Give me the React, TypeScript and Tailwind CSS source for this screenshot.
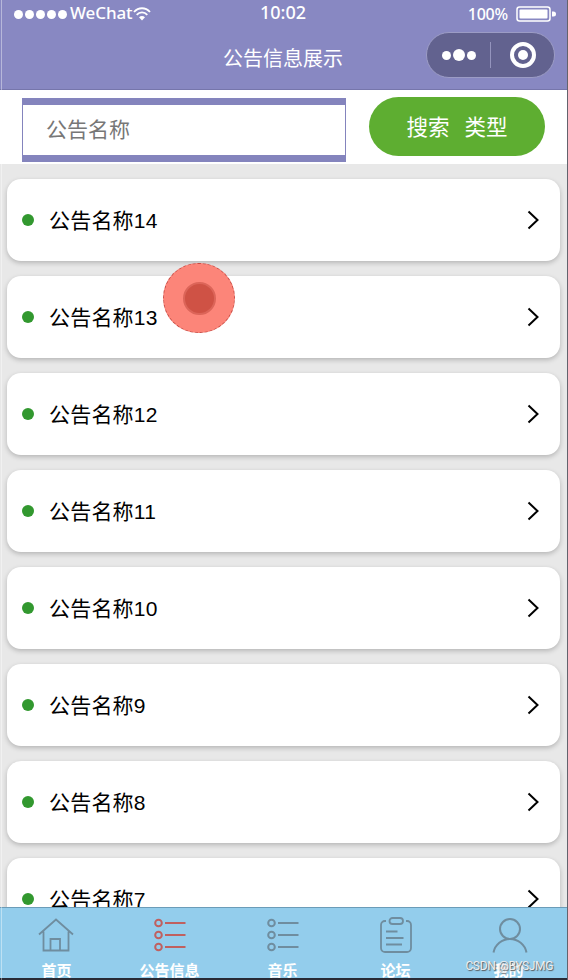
const notices = [14, 13, 12, 11, 10, 9, 8, 7];

const tabs = [
  { label: "首页", icon: <HomeIcon /> },
  { label: "公告信息", icon: <ListIcon />, active: true },
  { label: "音乐", icon: <ListIcon /> },
  { label: "论坛", icon: <ClipboardIcon /> },
  { label: "我的", icon: <UserIcon /> },
];

function HomeIcon() {
  return (
    <svg width="38" height="38" viewBox="0 0 38 38" fill="none" stroke="currentColor" strokeWidth="1.8">
      <path d="M1 18.500 18 3.500l17 15M5.500 15.500V34.500h25V15.500M12.500 34.500V23h9.500v11.500" />
    </svg>
  );
}

function ListIcon() {
  return (
    <svg width="38" height="38" viewBox="0 0 38 38" fill="none" stroke="currentColor" strokeWidth="2">
      <circle cx="7.500" cy="7" r="3.300" />
      <circle cx="7.500" cy="19" r="3.300" />
      <circle cx="7.500" cy="31" r="3.300" />
      <path d="M14 7h20.500M14 19h20.500M14 31h20.500" />
    </svg>
  );
}

function ClipboardIcon() {
  return (
    <svg width="38" height="38" viewBox="0 0 38 38" fill="none" stroke="currentColor" strokeWidth="1.8">
      <path d="M9 5H8a4 4 0 0 0-4 4V32a4 4 0 0 0 4 4h22a4 4 0 0 0 4-4V9a4 4 0 0 0-4-4h-1" />
      <rect x="12.500" y="2" width="13.500" height="6" rx="3" />
      <path d="M9 15.500h11.500M9 22h17.500M9 28.500h16" />
    </svg>
  );
}

function UserIcon() {
  return (
    <svg width="38" height="38" viewBox="0 0 38 38" fill="none" stroke="currentColor" strokeWidth="2">
      <circle cx="20" cy="13" r="10" />
      <path d="M3.500 36.500C5 28.500 12 23 20 23S35 28.500 36.500 36.500" />
    </svg>
  );
}

export default function App() {
  return (
    <div className="relative flex h-[980px] w-[568px] flex-col overflow-hidden bg-[#e8e8e8] font-['Liberation_Sans','Noto_Sans_CJK_SC',sans-serif] text-black">
      {/* HEADER */}
      <header className="h-[90px] shrink-0 border-b border-[#7676ab] bg-[#8888c2] text-white">
        <div className="grid h-[27px] grid-cols-3 items-center pr-[12px] pl-[14px] font-['Noto_Sans',sans-serif]">
          <div className="flex items-center">
            <div className="flex gap-[2px]">
              {[1, 2, 3, 4, 5].map((n) => (
                <span key={n} className="size-[9px] rounded-full bg-white"></span>
              ))}
            </div>
            <span className="ml-[3px] pb-[2px] text-[17px] leading-6 font-medium tracking-[-0.1px]">WeChat</span>
            <svg width="18" height="14" viewBox="0 0 18 14" fill="none" stroke="white" strokeWidth="1.8">
              <path d="M1 5C5.500 0 12.500 0 17 5M3.700 7.800c3-3.300 7.600-3.300 10.600 0" />
              <path d="M6 10.300c1.800-1.700 4.200-1.700 6 0L9 13.500Z" fill="white" stroke="none" />
            </svg>
          </div>
          <span className="pr-[4px] pb-[4px] text-center text-[18px] leading-6 font-medium">10:02</span>
          <div className="flex items-center justify-end gap-[8px]">
            <span className="text-[16px] leading-6 font-medium tracking-[-0.2px]">100%</span>
            <svg width="40" height="16" viewBox="0 0 40 16" fill="none">
              <rect x="1" y="1" width="33" height="14" rx="2.500" stroke="white" strokeWidth="1.500" />
              <rect x="3.500" y="3.500" width="28" height="9" rx="1" fill="white" />
              <path d="M36 5.500h1.500a2 2 0 0 1 0 5H36Z" fill="white" />
            </svg>
          </div>
        </div>
        <div className="grid grid-cols-3 pr-[13px] pl-[12px]">
          <h1 className="col-start-2 pt-[17px] pr-px text-center text-[20px] leading-[30px] whitespace-nowrap">公告信息展示</h1>
          <div className="mt-[5px] flex h-[46px] w-[129px] items-center justify-self-end rounded-full border border-[#9c9cc5] bg-[#62628f]">
            <div className="flex flex-1 items-center justify-center gap-[2px]">
              <span className="size-[9px] rounded-full bg-white"></span>
              <span className="size-[12px] rounded-full bg-white"></span>
              <span className="size-[9px] rounded-full bg-white"></span>
            </div>
            <span className="h-[26px] w-px bg-[#9494bd]"></span>
            <div className="flex flex-1 items-center justify-center">
              <span className="flex size-[26px] items-center justify-center rounded-full border-[4px] border-white">
                <span className="size-[10px] rounded-full bg-white"></span>
              </span>
            </div>
          </div>
        </div>
      </header>

      {/* SEARCH */}
      <section className="flex h-[74px] shrink-0 items-start bg-white pt-[7px] pl-[22px]">
        <input
          type="text"
          placeholder="公告名称"
          className="mt-px h-[64px] w-[324px] border-x-[1.500px] border-t-[7px] border-b-[7px] border-[#8484bd] bg-white pl-[23px] text-[21px] outline-none placeholder:text-[#777777]"
        />
        <button className="ml-[23px] flex h-[59px] w-[176px] items-center justify-center gap-[15px] rounded-full bg-[#5eae31] pt-[3px] text-[21.500px] text-white">
          <span>搜索</span>
          <span>类型</span>
        </button>
      </section>

      {/* NOTICE LIST */}
      <main className="flex min-h-0 flex-1 flex-col gap-[15px] overflow-hidden pt-[15px] pr-[8px] pl-[7px]">
        {notices.map((n) => (
          <div key={n} className="flex h-[82px] shrink-0 items-center rounded-[14px] bg-white pr-[20px] pl-[15px] shadow-[0_2px_5px_rgba(0,0,0,0.22)]">
            <span className="size-[12px] rounded-full bg-[#32982f]"></span>
            <span className="ml-[15px] flex-1 pt-[1px] text-[21px] leading-[30px] tracking-[0.2px]">公告名称{n}</span>
            <svg width="13" height="20" viewBox="0 0 13 20" fill="none" stroke="black" strokeWidth="2">
              <path d="m1.500 1.500 9 8.500-9 8.500" />
            </svg>
          </div>
        ))}
      </main>

      {/* TAB BAR */}
      <nav className="grid h-[73px] shrink-0 grid-cols-5 overflow-hidden border-t border-b-2 border-t-[#6b9cb8] border-b-[#292b36] bg-[#93cdec] pr-[3px]">
        {tabs.map((tab) => (
          <div key={tab.label} className="flex flex-col items-center pt-[8px]">
            <span className={tab.active ? "h-[38px] text-[#c0605f]" : "h-[38px] text-[#6f8d9f]"}>{tab.icon}</span>
            <span className="mt-[7px] text-[15px] leading-[20px] font-bold whitespace-nowrap text-white">{tab.label}</span>
          </div>
        ))}
      </nav>

      {/* frame edges */}
      <div className="pointer-events-none absolute inset-y-0 left-[1px] w-px bg-white/40"></div>
      <div className="pointer-events-none absolute inset-y-0 right-0 w-px bg-[#63636d]"></div>

      {/* touch pointer */}
      <div className="absolute top-[263px] left-[163px] flex h-[70px] w-[72px] items-center justify-center rounded-full border border-dashed border-[#c94b43] bg-[#fc8579]">
        <span className="size-[33px] rounded-full border-2 border-[#dc6559] bg-[#cf5245]"></span>
      </div>

      <span className="absolute right-[15px] bottom-[6px] font-['Roboto',sans-serif] text-[12px] leading-[16px] tracking-[-0.35px] whitespace-nowrap text-[#eeeeee] [text-shadow:1px_1px_1px_#555]">
        CSDN @BYSJMG
      </span>
    </div>
  );
}
